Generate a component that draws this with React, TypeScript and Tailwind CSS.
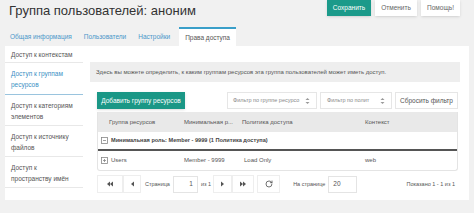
import { RotateCw } from "lucide-react";

function UpDown() {
  return (
    <svg width="5" height="8" viewBox="0 0 5 8" className="text-[#999] shrink-0">
      <path d="M0.5 3 L2.5 1 L4.5 3 Z M0.5 5 L2.5 7 L4.5 5 Z" fill="currentColor" />
    </svg>
  );
}

function Tri({ dir, double }: { dir: "l" | "r"; double?: boolean }) {
  const one = dir === "l" ? "M4 0.5 L1 3 L4 5.5 Z" : "M1 0.5 L4 3 L1 5.5 Z";
  const two = dir === "l" ? "M7 0.5 L4 3 L7 5.5 Z" : "M4 0.5 L7 3 L4 5.5 Z";
  return (
    <svg width={double ? 8 : 5} height="6" viewBox={double ? "0 0 8 6" : "0 0 5 6"} className="text-[#555]">
      <path d={one} fill="currentColor" />
      {double && <path d={two} fill="currentColor" />}
    </svg>
  );
}

function BoxIcon({ minus }: { minus?: boolean }) {
  return (
    <svg width="7" height="7" viewBox="0 0 7 7" className="text-[#888] shrink-0">
      <rect x="0.5" y="0.5" width="6" height="6" fill="none" stroke="currentColor" strokeWidth="0.8" />
      <path d="M2 3.5 H5" stroke="currentColor" strokeWidth="0.8" />
      {!minus && <path d="M3.5 2 V5" stroke="currentColor" strokeWidth="0.8" />}
    </svg>
  );
}

const sideItems = [
  { label: "Доступ к контекстам", active: false, first: true },
  { label: "Доступ к группам ресурсов", active: true },
  { label: "Доступ к категориям элементов", active: false },
  { label: "Доступ к источнику файлов", active: false },
  { label: "Доступ к пространству имён", active: false },
];

const tabs = ["Общая информация", "Пользователи", "Настройки", "Права доступа"];

export default function App() {
  return (
    <div className="w-[474px] h-[213px] overflow-hidden bg-[#f1f1f1] font-['Liberation_Sans',Arial,sans-serif] text-[#555]">
      {/* header */}
      <div className="flex justify-between h-[27px]">
        <h1 className="pl-[9px] pt-[3px] text-[13px] leading-[16px] text-[#333]">
          Группа пользователей: аноним
        </h1>
        <div className="flex gap-[4px] pr-[14px]">
          <button className="h-[16px] w-[44px] bg-[#1b9a8a] text-[6.5px] text-white shadow-sm">Сохранить</button>
          <button className="h-[16px] w-[42px] bg-white text-[6.5px] text-[#666] shadow-sm">Отменить</button>
          <button className="h-[16px] w-[39px] bg-white text-[6.5px] text-[#666] shadow-sm">Помощь!</button>
        </div>
      </div>

      {/* tabs */}
      <div className="flex pl-[4px] h-[19px] items-stretch">
        {tabs.map((t, i) => (
          <div
            key={t}
            className={
              i === 3
                ? "ml-[3px] flex items-center px-[6px] bg-white border-t-2 border-[#3a9fc9] text-[6.5px] text-[#555]"
                : "flex items-center px-[6px] text-[6.5px] text-[#4a97c9]"
            }
          >
            {t}
          </div>
        ))}
      </div>

      {/* body */}
      <div className="flex mx-[5px] h-[154px] bg-white">
        <div className="w-[78px] flex flex-col">
          {sideItems.map((s) => (
            <div
              key={s.label}
              className={
                "px-[6px] text-[6.5px] leading-[11px] border-b " +
                (s.first
                  ? "h-[17px] pt-[3px] text-[#555] border-[#e8e8e8]"
                  : s.active
                  ? "h-[32px] pt-[5px] text-[#3a8fc4] border-[#9ac4de]"
                  : "h-[31px] pt-[5px] text-[#555] border-[#e8e8e8]")
              }
            >
              {s.label}
            </div>
          ))}
        </div>

        <div className="flex-1 pl-[7px] pr-[9px] pt-[16px]">
          <div className="h-[20px] bg-[#eeeeee] flex items-center pl-[6px] text-[6px] text-[#555]">
            Здесь вы можете определить, к каким группам ресурсов эта группа пользователей может иметь доступ.
          </div>

          <div className="pl-[7px] pr-[2px]">
            <div className="mt-[10px] flex items-center justify-between h-[17px]">
              <button className="h-[17px] w-[88px] bg-[#1a9786] text-white text-[6.5px] shadow-sm">
                Добавить группу ресурсов
              </button>
              <div className="flex gap-[3px] h-[17px]">
                <div className="w-[90px] flex items-center justify-between pl-[5px] pr-[6px] bg-white border border-[#e6e6e6] text-[5.5px] text-[#888]">
                  <span className="whitespace-nowrap">Фильтр по группе ресурсо</span>
                  <UpDown />
                </div>
                <div className="w-[72px] flex items-center justify-between pl-[6px] pr-[6px] bg-white border border-[#e6e6e6] text-[5.5px] text-[#888]">
                  <span className="whitespace-nowrap">Фильтр по полит</span>
                  <UpDown />
                </div>
                <button className="w-[63px] bg-white border border-[#e6e6e6] text-[6.5px] text-[#555]">
                  Сбросить фильтр
                </button>
              </div>
            </div>

            {/* table */}
            <div className="mt-[3px] border border-t-0 border-[#e4e4e4] rounded-b-[3px]">
              <div className="flex h-[20px] items-center bg-[#e9e9e9] text-[6px] text-[#555] whitespace-nowrap">
                <div className="w-[75px] pl-[11px]">Группа ресурсов</div>
                <div className="w-[58px] pl-[11px]">Минимальная р...</div>
                <div className="w-[123px] pl-[11px]">Политика доступа</div>
                <div className="flex-1 pl-[11px]">Контекст</div>
              </div>
              <div className="flex h-[19px] items-center gap-[3px] pl-[3px] border-b-2 border-[#555] text-[5.6px] font-semibold text-[#444] whitespace-nowrap">
                <BoxIcon minus />
                <span>Минимальная роль: Member - 9999 (1 Политика доступа)</span>
              </div>
              <div className="flex h-[19px] items-center text-[6px] text-[#555] whitespace-nowrap">
                <div className="w-[75px] pl-[3px] flex items-center gap-[3px]">
                  <BoxIcon />
                  <span>Users</span>
                </div>
                <div className="w-[58px] pl-[11px]">Member - 9999</div>
                <div className="w-[123px] pl-[13px]">Load Only</div>
                <div className="flex-1 pl-[11px]">web</div>
              </div>
            </div>

            {/* pagination */}
            <div className="mt-[4px] flex items-center h-[18px] text-[5.5px] text-[#555] whitespace-nowrap">
              <div className="w-[26px] h-[18px] flex items-center justify-center border border-[#eee]">
                <Tri dir="l" double />
              </div>
              <div className="w-[18px] h-[18px] flex items-center justify-center border border-[#eee]">
                <Tri dir="l" />
              </div>
              <span className="ml-[4px]">Страница</span>
              <div className="ml-[3px] w-[25px] h-[17px] flex items-center justify-end pr-[4px] border border-[#e4e4e4] text-[6.5px]">
                1
              </div>
              <span className="ml-[3px]">из 1</span>
              <div className="ml-[2px] w-[19px] h-[18px] flex items-center justify-center border border-[#eee]">
                <Tri dir="r" />
              </div>
              <div className="w-[22px] h-[18px] flex items-center justify-center border border-[#eee]">
                <Tri dir="r" double />
              </div>
              <div className="ml-[3px] w-[23px] h-[18px] flex items-center justify-center border border-[#eee]">
                <RotateCw size={8} strokeWidth={2.5} className="text-[#555]" />
              </div>
              <span className="ml-[13px]">На странице</span>
              <div className="ml-[3px] w-[29px] h-[17px] flex items-center pl-[4px] border border-[#e4e4e4] text-[6.5px]">
                20
              </div>
              <span className="ml-auto pr-[3px]">Показано 1 - 1 из 1</span>
            </div>
          </div>
        </div>
      </div>
    </div>
  );
}
